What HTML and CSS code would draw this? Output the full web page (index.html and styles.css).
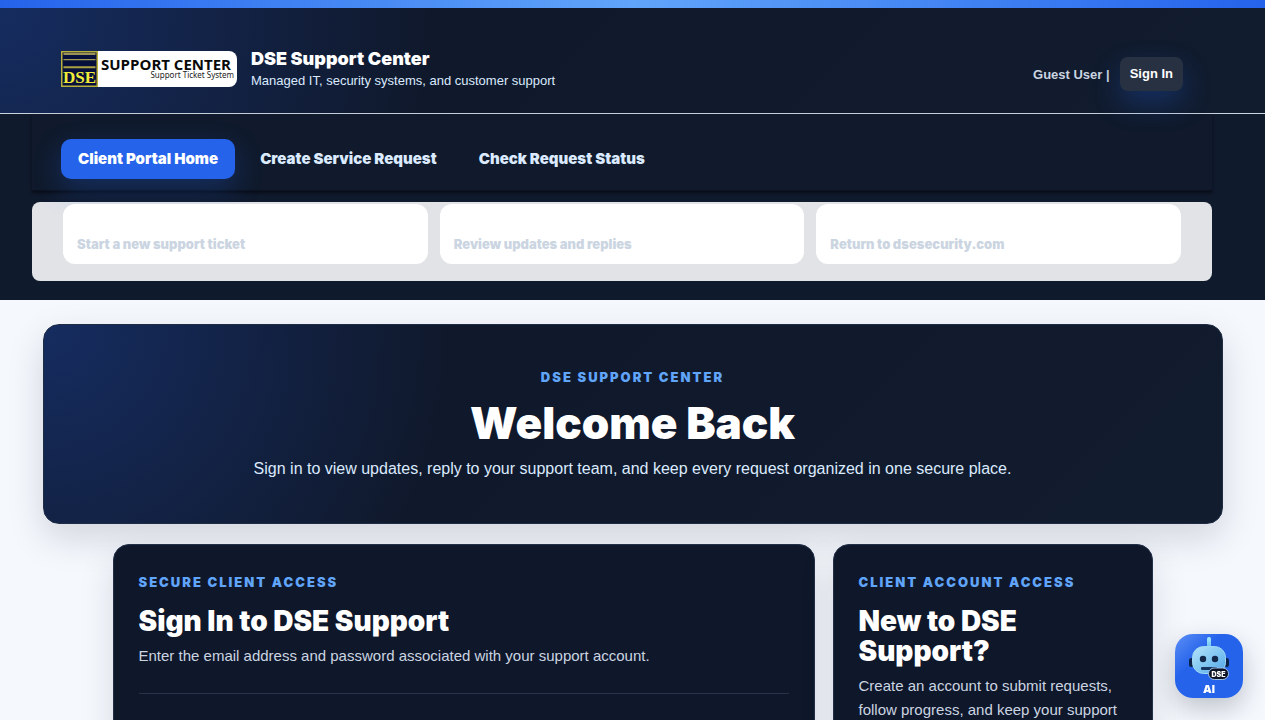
FILE: index.html
```html
<!DOCTYPE html>
<html lang="en">
<head>
<meta charset="utf-8">
<meta name="viewport" content="width=device-width, initial-scale=1">
<title>DSE Support Center</title>
<link rel="stylesheet" href="styles.css">
</head>
<body>
<div class="accent-bar"></div>
<header class="masthead">
  <div class="masthead-inner">
    <a class="brand" href="#">
      <svg class="logo" viewBox="0 0 176 36" role="img" aria-label="Support Center, Support Ticket System">
        <path d="M0 0H168a8 8 0 0 1 8 8V28a8 8 0 0 1-8 8H0Z" fill="#fff"/>
        <rect x=".75" y=".75" width="35.5" height="34.5" fill="#07103a" stroke="#b9b13a" stroke-width="1.5"/>
        <path d="M2.500 3H34.500" stroke="#99935a" stroke-width="2"/>
        <path d="M2.500 8.700H34.500" stroke="#a39c55" stroke-width="1.300"/>
        <path d="M2.500 16.200H34.500" stroke="#aba142" stroke-width="2"/>
        <text class="logo-mark" x="18.500" y="32" text-anchor="middle">DSE</text>
        <text class="logo-name" x="40" y="19">SUPPORT CENTER</text>
        <text class="logo-sub" x="173" y="27" text-anchor="end">Support Ticket System</text>
      </svg>
      <span class="brand-copy">
        <strong class="brand-title">DSE Support Center</strong>
        <span class="brand-sub">Managed IT, security systems, and customer support</span>
      </span>
    </a>
    <div class="user">
      <span>Guest User |</span>
      <a class="signin" href="#">Sign In</a>
    </div>
  </div>
</header>
<div class="portal">
  <nav class="nav">
    <a class="nav-link active" href="#">Client Portal Home</a>
    <a class="nav-link" href="#">Create Service Request</a>
    <a class="nav-link" href="#">Check Request Status</a>
  </nav>
  <div class="shortcuts">
    <a class="shortcut" href="#">Start a new support ticket</a>
    <a class="shortcut" href="#">Review updates and replies</a>
    <a class="shortcut" href="#">Return to dsesecurity.com</a>
  </div>
</div>
<main class="main">
  <section class="hero">
    <p class="eyebrow">DSE SUPPORT CENTER</p>
    <h1 class="hero-title">Welcome Back</h1>
    <p class="hero-text">Sign in to view updates, reply to your support team, and keep every request organized in one secure place.</p>
  </section>
  <div class="cards">
    <section class="card">
      <p class="eyebrow">SECURE CLIENT ACCESS</p>
      <h2 class="card-title">Sign In to DSE Support</h2>
      <p class="card-text">Enter the email address and password associated with your support account.</p>
      <hr class="rule">
    </section>
    <section class="card">
      <p class="eyebrow">CLIENT ACCOUNT ACCESS</p>
      <h2 class="card-title">New to DSE Support?</h2>
      <p class="card-text">Create an account to submit requests, follow progress, and keep your support</p>
    </section>
  </div>
</main>
<button class="assistant" type="button" aria-label="DSE AI assistant">
  <svg class="robot" viewBox="0 0 68 64" aria-hidden="true">
    <defs>
      <linearGradient id="face" x1="0" y1="0" x2="1" y2="1">
        <stop offset="0" stop-color="#b5e2fa"/>
        <stop offset=".5" stop-color="#83c8f2"/>
        <stop offset="1" stop-color="#4fa3e8"/>
      </linearGradient>
      <linearGradient id="antenna" x1="0" y1="0" x2="0" y2="1">
        <stop offset="0" stop-color="#a8edff"/>
        <stop offset="1" stop-color="#69bcea"/>
      </linearGradient>
    </defs>
    <rect x="14" y="24" width="6" height="9" rx="2.500" fill="#0b2349"/>
    <rect x="48" y="24" width="6" height="9" rx="2.500" fill="#0b2349"/>
    <rect x="32" y="3" width="4" height="11" rx="2" fill="url(#antenna)"/>
    <rect x="17.500" y="12.500" width="33" height="27" rx="11" fill="url(#face)" stroke="#9fd8f4"/>
    <circle cx="28" cy="25" r="3.200" fill="#12284b"/>
    <circle cx="40" cy="25" r="3.200" fill="#12284b"/>
    <rect x="26" y="33" width="16" height="3" rx="1" fill="#17365f"/>
    <rect x="33.500" y="34" width="20" height="11.500" rx="5.700" fill="#0b1324" stroke="#9fc0e8"/>
    <text class="badge-text" x="43.500" y="42.500" text-anchor="middle">DSE</text>
    <text class="ai-text" x="34" y="59" text-anchor="middle">AI</text>
  </svg>
</button>
</body>
</html>
```
FILE: styles.css
```css
* { box-sizing: border-box; }

body {
  margin: 0;
  height: 100vh;
  overflow: hidden;
  background: #f5f8fd;
  color: #fff;
  font-family: "Liberation Sans", Arial, sans-serif;
}

a { color: inherit; text-decoration: none; }
p, h1, h2 { margin: 0; }

.accent-bar {
  height: 8px;
  background: linear-gradient(90deg, #2563eb, #60a5fa 50%, #2563eb);
}

.masthead {
  padding: 0 82px 0 61px;
  background:
    radial-gradient(circle at top left, rgba(37, 99, 235, .28), transparent 34%),
    linear-gradient(135deg, #0f172a, #111c2e);
  border-bottom: 1px solid #cbd5e1;
}

.masthead-inner {
  display: flex;
  align-items: center;
  justify-content: space-between;
  padding: 39px 0 22px;
}

.brand { display: flex; align-items: center; gap: 14px; }
.logo { display: block; width: 176px; height: 36px; }
.logo-mark { font: bold 17px "Liberation Serif", serif; fill: #f0ec38; }
.logo-name { font: bold 15px "Open Sans", sans-serif; fill: #0a0a0a; }
.logo-sub { font: 8px "Noto Sans", sans-serif; fill: #222; }
.brand-copy { display: flex; flex-direction: column; gap: 2px; padding-top: 2px; }
.brand-title { font: 900 18px/20px Inter, sans-serif; }
.brand-sub { font-size: 13px; line-height: 20px; color: #dbeafe; }

.user {
  display: flex;
  align-items: center;
  gap: 10px;
  padding-top: 10px;
  font-size: 13px;
  font-weight: bold;
  color: #cbd5e1;
}

.signin {
  padding: 8px 10px;
  line-height: 18px;
  border-radius: 8px;
  background: #283142;
  color: #fff;
  box-shadow: 0 12px 28px rgba(37, 99, 235, .28);
}

.portal {
  padding: 0 53px 19px 32px;
  background: #101a2d;
}

.nav {
  display: flex;
  gap: 8px;
  padding: 25px 29px 11px;
  margin-bottom: 11px;
  background: #101a2c;
  border-bottom: 1px solid #0a1220;
  box-shadow: 0 2px 3px rgba(0, 0, 0, .5);
}

.nav-link {
  padding: 10px 17px;
  border-radius: 10px;
  font: 900 15px/20px Inter, sans-serif;
  color: #dbeafe;
}

.nav-link.active {
  background: #2563eb;
  color: #fff;
  box-shadow: 0 10px 28px rgba(37, 99, 235, .28);
}

.shortcuts {
  display: grid;
  grid-template-columns: repeat(3, 1fr);
  gap: 12px;
  padding: 2px 31px 17px;
  border-radius: 8px;
  background: #e1e3e7;
}

.shortcut {
  padding: 30px 14px 10px;
  border-radius: 12px;
  background: #fff;
  font: 900 13px/20px Inter, sans-serif;
  color: #cbd5e1;
}

.main {
  display: flex;
  flex-direction: column;
  align-items: center;
  gap: 20px;
  padding: 24px 42px;
}

.hero {
  width: 100%;
  max-width: 1180px;
  padding: 42px 24px 41px;
  text-align: center;
  border: 1px solid #1e2c45;
  border-radius: 16px;
  background:
    radial-gradient(circle at top left, rgba(37, 99, 235, .28), transparent 34%),
    linear-gradient(135deg, #0f172a, #111c2e);
  box-shadow: 0 14px 36px rgba(15, 23, 42, .15);
}

.eyebrow {
  font: 900 13px/20px Inter, sans-serif;
  letter-spacing: 2px;
  color: #60a5fa;
}

.hero-title { margin: 12px 0 9px; font: 900 44px/48px Inter, sans-serif; }
.hero-text { font-size: 16px; line-height: 26px; color: #dbeafe; }

.cards {
  display: grid;
  grid-template-columns: minmax(0, 1fr) 320px;
  gap: 18px;
  width: 100%;
  max-width: 1040px;
}

.card {
  min-height: 480px;
  padding: 27px 25px;
  border: 1px solid #22304a;
  border-radius: 16px;
  background: #0f172a;
  box-shadow: 0 14px 36px rgba(15, 23, 42, .12);
}

.card-title { margin: 14px 0 8px; font: 900 28px/30px Inter, sans-serif; }
.card-text { font-size: 15px; line-height: 24px; color: #cbd5e1; }
.rule { margin: 25px 0 0; border: 0; border-top: 1px solid #27334a; }

.assistant {
  position: fixed;
  right: 22px;
  bottom: 22px;
  width: 68px;
  height: 64px;
  padding: 0;
  border: 0;
  border-radius: 18px;
  background: linear-gradient(135deg, #5b8ef5, #2563eb 35%, #2563eb);
  box-shadow: 0 10px 26px rgba(15, 23, 42, .24);
}

.robot { display: block; width: 100%; height: 100%; }
.badge-text { font: 900 7px Inter, sans-serif; fill: #fff; }
.ai-text { font: 900 11px Inter, sans-serif; fill: #fff; }
```
